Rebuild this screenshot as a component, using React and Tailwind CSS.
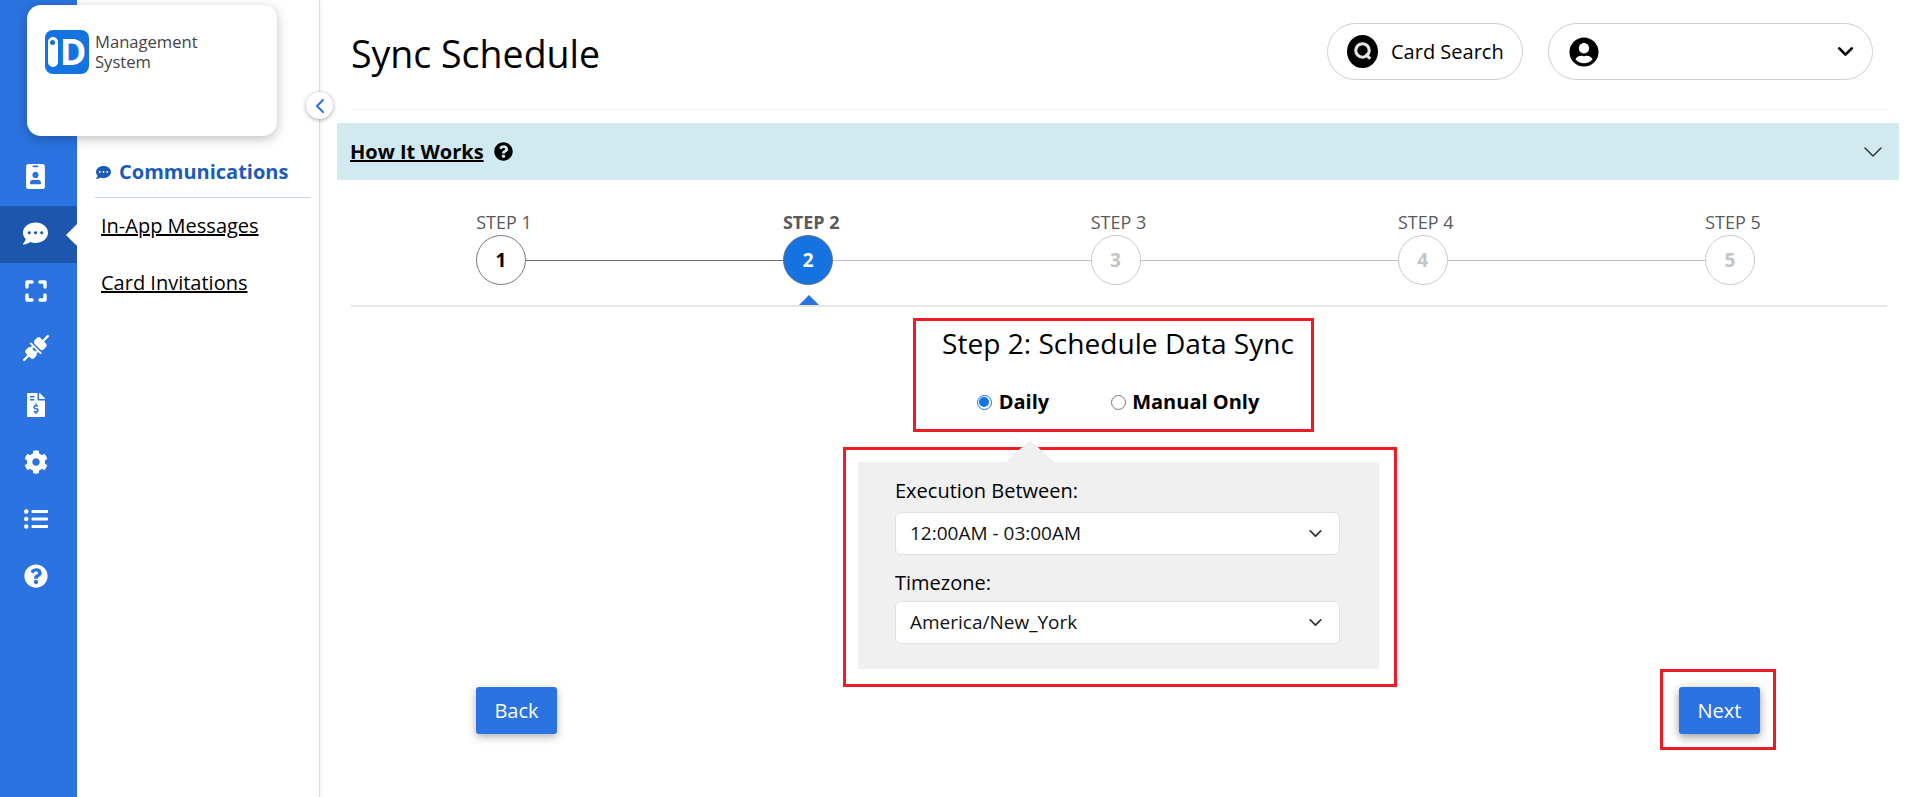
import React from "react";
import { ChevronDown, ChevronLeft } from "lucide-react";
import {
  FaIdBadge,
  FaCommentDots,
  FaFileInvoiceDollar,
  FaCog,
  FaListUl,
  FaQuestionCircle,
  FaUserCircle,
  FaQuestionCircle as Help,
} from "react-icons/fa";

const ScanIcon = () => (
  <svg width="22" height="22" viewBox="0 0 22 22" fill="none" stroke="white" strokeWidth="3.4" strokeLinecap="round" strokeLinejoin="round">
    <path d="M2 7V2h5M15 2h5v5M20 15v5h-5M7 20H2v-5" />
  </svg>
);

const PlugIcon = () => (
  <svg width="36" height="36" viewBox="0 0 28 28" fill="white" stroke="white" strokeLinecap="round">
    <g transform="rotate(-45 14 14)">
      <rect x="5.5" y="9.5" width="6" height="9" rx="2" stroke="none" />
      <rect x="15.5" y="9" width="6.5" height="10" rx="2" stroke="none" />
      <rect x="13" y="8" width="1.4" height="12" stroke="none" />
      <path d="M1 14h5M11 11.5h2M11 16.5h2M22 14h5" strokeWidth="1.8" fill="none" />
    </g>
  </svg>
);

const CardSearchIcon = () => (
  <svg width="31" height="35" viewBox="0 0 30 32">
    <ellipse cx="15" cy="16" rx="15" ry="16" fill="#000" />
    <circle cx="15" cy="15" r="6.5" fill="none" stroke="#e5e5e5" strokeWidth="3" />
    <path d="M18 18.5l4.5 4.5" stroke="#e5e5e5" strokeWidth="3" />
  </svg>
);

const rail = [
  [<FaIdBadge size={25} color="white" />, false],
  [<FaCommentDots size={25} color="white" />, true],
  [<ScanIcon />, false],
  [<PlugIcon />, false],
  [<FaFileInvoiceDollar size={24} color="white" />, false],
  [<FaCog size={24} color="white" />, false],
  [<FaListUl size={24} color="white" />, false],
  [<FaQuestionCircle size={24} color="white" />, false],
];

const steps = [
  { n: 1, state: "done" },
  { n: 2, state: "active" },
  { n: 3, state: "todo" },
  { n: 4, state: "todo" },
  { n: 5, state: "todo" },
];

function Step({ n, state }) {
  const circle =
    state === "active"
      ? "bg-[#1473e0] border-[#6f7680] text-white"
      : state === "done"
        ? "bg-white border-[#77797b] text-black"
        : "bg-white border-[#c9c9c9] text-[#c4c4c4]";
  return (
    <div className="flex w-[50px] shrink-0 flex-col items-center">
      <span className={`ml-[6px] whitespace-nowrap pb-[2px] text-[18px] leading-[21px] text-[#58595b] ${state === "active" ? "font-bold" : ""}`}>
        STEP {n}
      </span>
      <span className={`flex h-[50px] w-[50px] items-center justify-center rounded-full border text-[19px] font-bold ${circle}`}>
        {n}
      </span>
    </div>
  );
}

function Select({ value }) {
  return (
    <div className="flex h-[43px] w-[445px] items-center justify-between rounded-[6px] border border-[#dfe1e6] bg-white pl-[14px] pr-[13px] text-[19px] text-[#111]">
      <span>{value}</span>
      <ChevronDown size={21} strokeWidth={2} color="#333" />
    </div>
  );
}

export default function App() {
  return (
    <div className="relative flex h-[797px] w-[1909px] overflow-hidden bg-white font-['Open_Sans',sans-serif] text-black">
      <aside className="flex w-[77px] shrink-0 flex-col bg-[#2b73e0] pt-[149px]">
        {rail.map(([icon, active], i) => (
          <div key={i} className={`relative flex h-[57px] items-center justify-center pb-[2px] pr-[6px] ${active ? "bg-[#1c56ad]" : ""}`}>
            {icon}
            {active && <span className="absolute right-0 top-[18px] h-0 w-0 border-y-[11px] border-r-[11px] border-y-transparent border-r-white" />}
          </div>
        ))}
      </aside>

      <div className="absolute left-[27px] top-[5px] z-10 h-[131px] w-[250px] rounded-[14px] bg-white pl-[18px] pt-[25px] shadow-[0_3px_12px_rgba(0,0,0,0.25)]">
        <div className="flex items-start gap-[6px]">
          <div className="flex h-[44px] w-[44px] items-center justify-center gap-[2px] rounded-[8px] bg-[#1473e0] text-[36px] font-bold leading-none text-white">
            <span className="flex h-[30px] w-[10px] justify-center rounded-full bg-white pt-[3px]">
              <span className="h-[5px] w-[5px] rounded-full bg-[#1473e0]" />
            </span>
            D
          </div>
          <div className="pt-[2px] text-[16.6px] leading-[20px] text-[#444]">
            Management
            <br />
            System
          </div>
        </div>
      </div>

      <nav className="relative flex w-[243px] shrink-0 flex-col border-r border-[#dcdcdc] pl-[18px] pr-[9px] pt-[158px] shadow-[1px_0_4px_rgba(0,0,0,0.06)]">
        <button className="absolute right-[-14px] top-[92px] z-10 flex h-[27px] w-[27px] items-center justify-center rounded-full bg-white shadow-[0_1px_4px_rgba(0,0,0,0.35)]">
          <ChevronLeft size={24} color="#2b73e0" strokeWidth={2} />
        </button>
        <div className="flex items-center gap-[8px] border-b border-[#c5d3ea] pb-[11px] pl-[1px] text-[20px] font-bold leading-[28px] text-[#1c5bb8]">
          <FaCommentDots size={15} />
          Communications
        </div>
        <a className="ml-[6px] mt-[13px] text-[20px] leading-[30px] underline">In-App Messages</a>
        <a className="ml-[6px] mt-[27px] text-[20px] leading-[30px] underline">Card Invitations</a>
      </nav>

      <main className="flex min-w-0 flex-1 flex-col">
        <header className="ml-[31px] mr-[22px] flex h-[110px] items-start justify-between border-b border-[#f0f0f0] pt-[23px]">
          <h1 className="text-[37.5px] leading-[62px]">Sync Schedule</h1>
          <div className="mr-[14px] flex gap-[25px]">
            <div className="flex h-[57px] w-[196px] items-center gap-[13px] rounded-full border border-[#cfcfcf] pl-[19px] text-[20px]">
              <CardSearchIcon />
              Card Search
            </div>
            <div className="flex h-[57px] w-[325px] items-center justify-between rounded-full border border-[#cfcfcf] pl-[20px] pr-[14px]">
              <FaUserCircle size={30} />
              <ChevronDown size={25} strokeWidth={2.6} />
            </div>
          </div>
        </header>

        <div className="ml-[17px] mr-[10px] mt-[13px] flex h-[57px] items-center justify-between bg-[#d1eaef] pl-[13px] pr-[10px]">
          <div className="flex items-center gap-[10px]">
            <span className="text-[20px] font-bold underline">How It Works</span>
            <Help size={19} />
          </div>
          <ChevronDown size={32} strokeWidth={1.1} color="#333" />
        </div>

        <div className="ml-[31px] mr-[22px] flex flex-col items-center">
          <div className="relative mt-[33px] flex h-[94px] w-full justify-center border-b-2 border-[#e6e6e6]">
            <div className="ml-[-7px] flex h-[72px] w-[1279px] items-end">
              {steps.map((s, i) => (
                <React.Fragment key={s.n}>
                  <Step {...s} />
                  {i < 4 && <span className={`mb-[24px] h-[1px] flex-1 ${i === 0 ? "bg-[#6b6b6b]" : "bg-[#bdbdbd]"}`} />}
                </React.Fragment>
              ))}
            </div>
            <span className="absolute bottom-0 left-[448px] h-0 w-0 border-x-[10px] border-b-[10px] border-x-transparent border-b-[#2b73e0]" />
          </div>

          <div className="ml-[-11px] mt-[11px] flex h-[114px] w-[401px] flex-col items-center border-[3px] border-[#ed1c24]">
            <div className="ml-[9px] mt-[1px] text-[28.1px] leading-[42px]">Step 2: Schedule Data Sync</div>
            <div className="ml-[9px] mt-[24px] flex items-center text-[20px] font-bold leading-[28px]">
              <span className="mr-[7px] flex h-[15px] w-[15px] items-center justify-center rounded-full border border-[#1473e0]">
                <span className="h-[10px] w-[10px] rounded-full bg-[#1473e0]" />
              </span>
              Daily
              <span className="ml-[62px] mr-[6px] h-[15px] w-[15px] rounded-full border border-[#767676]" />
              Manual Only
            </div>
          </div>

          <div className="ml-[2px] mt-[15px] flex h-[240px] w-[554px] border-[3px] border-[#ed1c24] pl-[12px] pt-[12px]">
            <div className="relative h-[207px] w-[521px] bg-[#f0f0f0] pl-[37px] pt-[16px]">
              <span className="absolute left-[148px] top-[-22px] h-0 w-0 border-x-[24px] border-b-[22px] border-x-transparent border-b-[#f0f0f0]" />
              <div className="relative text-[20px] leading-[25px]">Execution Between:</div>
              <div className="mt-[9px]">
                <Select value="12:00AM - 03:00AM" />
              </div>
              <div className="mt-[15px] text-[20px] leading-[25px]">Timezone:</div>
              <div className="mt-[6px]">
                <Select value="America/New_York" />
              </div>
            </div>
          </div>

          <div className="mt-[-18px] flex w-full items-start justify-between pl-[125px] pr-[111px]">
            <button className="mt-[18px] h-[47px] w-[81px] rounded-[3px] bg-[#2b73e0] text-[20px] text-white shadow-[0_3px_8px_rgba(0,0,0,0.3)]">
              Back
            </button>
            <div className="border-[3px] border-[#ed1c24] pb-[13px] pl-[16px] pr-[13px] pt-[15px]">
              <button className="block h-[47px] w-[81px] rounded-[3px] bg-[#2b73e0] text-[20px] text-white shadow-[0_3px_10px_rgba(0,0,0,0.4)]">
                Next
              </button>
            </div>
          </div>
        </div>
      </main>
    </div>
  );
}
